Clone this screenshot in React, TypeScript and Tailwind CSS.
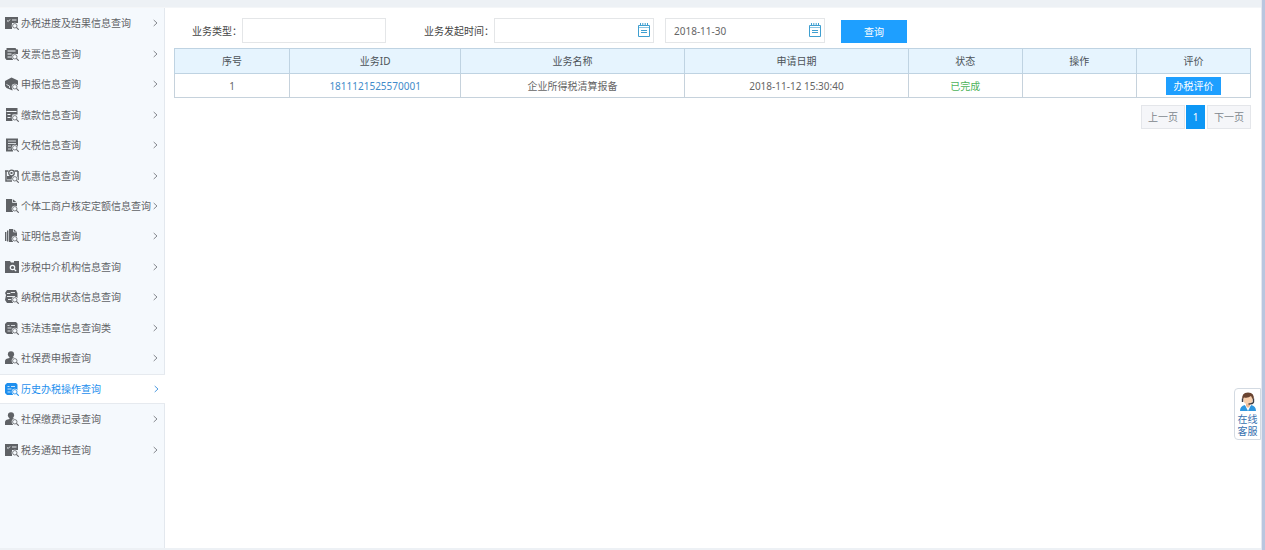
import type { ReactNode } from 'react';

const glyphs: Record<string, ReactNode> = {
  progress: (
    <>
      <path d="M0 1h13v6H7v6H0z" />
      <path d="m2 4.500 1.200 1L5 3.500M7 4h4.500" stroke="#f5f9fd" strokeWidth=".9" fill="none" />
    </>
  ),
  invoice: (
    <>
      <path d="M1.500 1h9l1 1.500H13V7H8v6H1.500L0 11V3h1.500z" />
      <path d="M2.500 4h8M2.500 7h4M2.500 10h4" stroke="#f5f9fd" fill="none" />
    </>
  ),
  declare: (
    <>
      <path d="M6.500 0.500 13 3.500V8H7.500v5.500L1.500 11 0 9V4z" />
      <path d="M1.500 7.500 4.500 9v2" stroke="#f5f9fd" strokeWidth=".8" fill="none" />
    </>
  ),
  payment: (
    <>
      <path d="M1 0h11.500v6.500H7.500V13H1z" />
      <path d="M1.500 3.500h10M2.500 6.500h3M2.500 9.500h3" stroke="#f5f9fd" fill="none" />
    </>
  ),
  arrears: (
    <>
      <path d="M1 0.500h12V9H8v4.500H1z" />
      <path d="M3 3h8M3 5.500h8M3 8h3M3 11h3" stroke="#f5f9fd" strokeWidth=".8" fill="none" />
    </>
  ),
  discount: (
    <>
      <path d="M0 2h3.500M1 2v10h4M13 2v9M9.500 2H13M3 12h4" stroke="currentColor" fill="none" strokeWidth="1.500" />
      <circle cx="6.500" cy="4" r="2.800" fill="none" stroke="currentColor" strokeWidth="1.300" />
      <path d="M2 7h9v3.500H2zM5.500 3h2v2h-2z" />
    </>
  ),
  household: (
    <>
      <path d="M1 0h6.500L12 3.500V8H8v5H1z" />
      <path d="M7.500 0v3.500H12" stroke="#f5f9fd" strokeWidth=".8" fill="none" />
    </>
  ),
  certificate: (
    <>
      <path d="M4 0h4.500L12 3v5H8v5H4zM0 3h1.400v9H0zM2 1.500h1.400V12.500H2z" />
      <path d="M8.500 0v3H12" stroke="#f5f9fd" fill="none" strokeWidth=".7" />
    </>
  ),
  agency: <path d="M0 1h5l1 1.500h3V1h5v12H0z" />,
  credit: (
    <>
      <path d="M2 0h9l1.500 3v5H8v5H2L0 10l1-5-1-2z" />
      <path d="M2 3.500h3l1-1h4M2 6.500h8M3 9.500h3" stroke="#f5f9fd" strokeWidth=".9" fill="none" />
    </>
  ),
  list: (
    <>
      <path d="M2 1h9l1.500 1.500V8H8v5H2L0 11V3z" />
      <path d="M2.500 4.500h2M6 4.500h4M2.500 7h4M2.500 10h3" stroke="#f5f9fd" strokeWidth=".8" fill="none" />
    </>
  ),
  person: (
    <>
      <circle cx="6" cy="3.300" r="3.100" />
      <path d="M4.500 6h3q3.500 1 4 3H8v4H0v-3q0-2.500 4.500-3z" />
    </>
  ),
};

function MenuIcon({ name }: { name: string }) {
  return (
    <svg viewBox="0 0 14 14" className="size-3.5 shrink-0" fill="currentColor" aria-hidden="true">
      {glyphs[name]}
      {name === 'agency' ? (
        <g fill="none" stroke="#f5f9fd" strokeWidth="1.200">
          <circle cx="7.500" cy="7.500" r="2.200" />
          <path d="m9 9 2.200 2.200" />
        </g>
      ) : (
        <>
          <circle cx="9.800" cy="9.800" r="3.100" fill="#f5f9fd" />
          <g fill="none" stroke="currentColor" strokeWidth=".8">
            <circle cx="9.800" cy="9.800" r="2.200" />
            <path d="m11.400 11.400 2.300 2.300" strokeWidth="1.100" />
          </g>
        </>
      )}
    </svg>
  );
}

const menu = [
  { icon: 'progress', label: '办税进度及结果信息查询' },
  { icon: 'invoice', label: '发票信息查询' },
  { icon: 'declare', label: '申报信息查询' },
  { icon: 'payment', label: '缴款信息查询' },
  { icon: 'arrears', label: '欠税信息查询' },
  { icon: 'discount', label: '优惠信息查询' },
  { icon: 'household', label: '个体工商户核定定额信息查询' },
  { icon: 'certificate', label: '证明信息查询' },
  { icon: 'agency', label: '涉税中介机构信息查询' },
  { icon: 'credit', label: '纳税信用状态信息查询' },
  { icon: 'list', label: '违法违章信息查询类' },
  { icon: 'person', label: '社保费申报查询' },
  { icon: 'list', label: '历史办税操作查询', active: true },
  { icon: 'person', label: '社保缴费记录查询' },
  { icon: 'progress', label: '税务通知书查询' },
];

function Sidebar() {
  return (
    <aside className="w-[165px] shrink-0 bg-[#f5f9fd] shadow-[inset_-1px_0_0_#e3e8ee]">
      <nav className="grid h-[457px] auto-rows-fr">
        {menu.map((item) => (
          <a
            key={item.label}
            href="#"
            className={
              item.active
                ? 'flex items-center border-y border-[#e6eaef] bg-white pl-[5px] pr-1.5 text-[#1e8fee]'
                : 'flex items-center pl-[5px] pr-[7px] text-[#5f6266]'
            }
          >
            <MenuIcon name={item.icon} />
            <span className="ml-0.5 min-w-0 flex-1 whitespace-nowrap">{item.label}</span>
            <svg viewBox="0 0 5 8" className="h-2 w-[5px] shrink-0" fill="none" stroke={item.active ? '#4f9be0' : '#85898e'} aria-hidden="true">
              <path d="M.7 1 4 4 .7 7" />
            </svg>
          </a>
        ))}
      </nav>
    </aside>
  );
}

function CalendarIcon() {
  return (
    <svg viewBox="0 0 12 14" className="pointer-events-none absolute right-1 top-[5px] h-3.5 w-3" fill="none" stroke="#3f9fd0" aria-hidden="true">
      <path d="M.5 2.500h11v11H.5z" />
      <path d="M.5 4.500h11" strokeWidth=".6" />
      <path d="M2.500 0v2.500M4.800 0v2.500M7.200 0v2.500M9.500 0v2.500M3 7.500h6M3 9.500h6" />
    </svg>
  );
}

function DateInput({ id, label, value }: { id: string; label: string; value: string }) {
  return (
    <div className="relative w-[160px]">
      <input
        id={id}
        type="text"
        aria-label={label}
        defaultValue={value}
        className="h-[25px] w-full border border-[#e4e6e8] bg-white pl-2 pr-5 text-[#666] outline-none"
      />
      <CalendarIcon />
    </div>
  );
}

const th = 'border border-[#bfd3e2] p-0 font-normal';
const td = 'border border-[#c6d2dc] p-0';

function Results() {
  return (
    <table className="mt-[5px] w-full table-fixed border-collapse text-center">
      <thead>
        <tr className="h-[25px] bg-[#e6f4fe] text-[#4c5258]">
          <th className={`${th} w-[10.7%]`}>序号</th>
          <th className={`${th} w-[15.9%]`}>业务ID</th>
          <th className={`${th} w-[20.8%]`}>业务名称</th>
          <th className={`${th} w-[20.8%]`}>申请日期</th>
          <th className={`${th} w-[10.6%]`}>状态</th>
          <th className={`${th} w-[10.6%]`}>操作</th>
          <th className={`${th} w-[10.6%]`}>评价</th>
        </tr>
      </thead>
      <tbody>
        <tr className="h-6 text-[#666]">
          <td className={td}>1</td>
          <td className={td}>
            <a href="#" className="text-[#428bca]">1811121525570001</a>
          </td>
          <td className={td}>企业所得税清算报备</td>
          <td className={td}>2018-11-12 15:30:40</td>
          <td className={`${td} text-[#4db35a]`}>已完成</td>
          <td className={td} />
          <td className={td}>
            <button type="button" className="mx-auto block h-[18px] w-[55px] bg-[#1e9fff] text-white">
              办税评价
            </button>
          </td>
        </tr>
      </tbody>
    </table>
  );
}

function ServiceBadge() {
  return (
    <button
      type="button"
      className="fixed right-1 top-[388px] flex w-[27px] flex-col items-center rounded-l border border-[#d3dae2] bg-white pb-0.5 pt-[3px] leading-3 text-[#356fae]"
    >
      <svg viewBox="0 0 18 20" className="mb-px h-5 w-[18px]" aria-hidden="true">
        <path d="M1 19q0-5 5-6l3 3 3-3q5 1 5 6z" fill="#2f97df" />
        <path d="m6 13 3 6 3-6z" fill="#fff" />
        <path d="M7 11h4v3l-2 2-2-2z" fill="#f0b992" />
        <ellipse cx="9" cy="7.500" rx="4.800" ry="5" fill="#f8cfad" />
        <path d="M3.500 8Q2 .5 9 .5T14.500 8Q13 6.500 12 4 9 6.500 5 5.500z" fill="#6a4431" />
        <path d="M3.500 6.500v3.500M14.500 6.500V10q-.5 2-5 2" fill="none" stroke="#3b3b42" strokeWidth="1.400" />
      </svg>
      <span>在线</span>
      <span>客服</span>
    </button>
  );
}

export default function App() {
  return (
    <div className="flex min-h-screen flex-col border-r-[3px] border-[#b9c6df] bg-white font-['Noto_Sans','Noto_Sans_CJK_SC',sans-serif] text-[10px] leading-4">
      <div className="flex flex-1 flex-col border-r border-[#e4e7f0]">
        <div className="h-2 border-b border-[#f4f6f8] bg-[#edf1f5]" />
        <div className="flex flex-1">
          <Sidebar />
          <main className="min-w-0 flex-1 pl-[9px] pr-2.5 pt-2.5">
            <form className="flex items-end pl-[18px] text-[#444]" onSubmit={(e) => e.preventDefault()}>
              <div className="flex items-center">
                <label htmlFor="type" className="whitespace-nowrap">业务类型：</label>
                <input id="type" type="text" className="h-[25px] w-36 border border-[#e4e6e8] bg-white px-2 outline-none" />
              </div>
              <div className="ml-[38px] flex items-center">
                <label htmlFor="from" className="whitespace-nowrap">业务发起时间：</label>
                <DateInput id="from" label="业务发起时间" value="" />
                <div className="w-[11px]" />
                <DateInput id="to" label="结束时间" value="2018-11-30" />
              </div>
              <button type="submit" className="ml-4 h-[23px] w-[66px] bg-[#1e9fff] text-white">查询</button>
            </form>
            <Results />
            <div className="mt-[7px] flex justify-end text-[#80868d]">
              <button type="button" className="h-6 w-11 border border-[#e4e6ea] bg-[#f5f6f9]">上一页</button>
              <button type="button" className="ml-px mr-0.5 h-6 w-[19px] bg-[#0d97f5] text-white">1</button>
              <button type="button" className="h-6 w-11 border border-[#e4e6ea] bg-[#f5f6f9]">下一页</button>
            </div>
          </main>
        </div>
        <div className="h-0.5 bg-[#edf1f5]" />
      </div>
      <ServiceBadge />
    </div>
  );
}
